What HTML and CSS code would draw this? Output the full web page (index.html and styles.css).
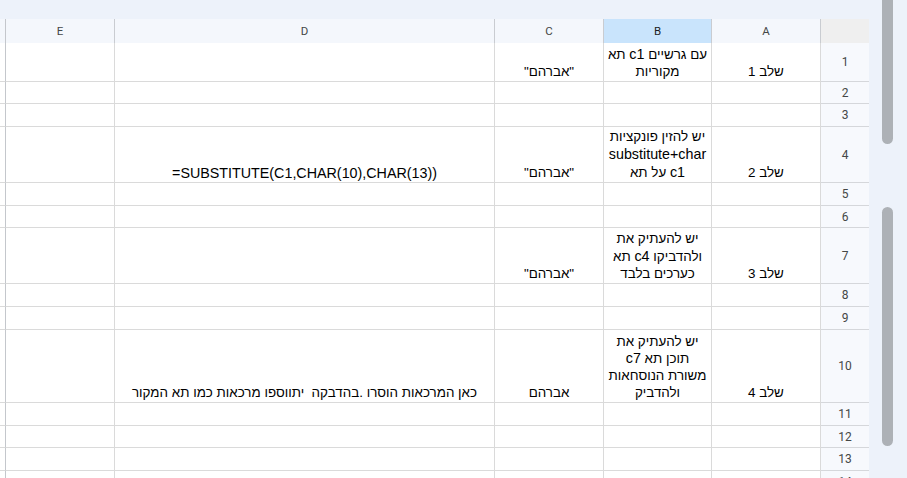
FILE: index.html
```html
<!DOCTYPE html>
<html lang="he">
<head>
<meta charset="utf-8">
<title>Sheet</title>
<link rel="stylesheet" href="styles.css">
</head>
<body>
<div class="app">
  <div class="left">
    <div class="topbar"></div>
    <div class="sheet">
      <!-- header -->
      <div class="hd edge"></div>
      <div class="hd">E</div>
      <div class="hd">D</div>
      <div class="hd">C</div>
      <div class="hd sel">B</div>
      <div class="hd">A</div>
      <div class="corner"></div>

      <!-- row 1 -->
      <div class="c edge"></div>
      <div class="c"></div>
      <div class="c"></div>
      <div class="c"><p class="t" dir="rtl">"אברהם"</p></div>
      <div class="c"><p class="t" dir="ltr">תא <span class="lat">c1</span> עם גרשיים<br>מקוריות</p></div>
      <div class="c"><p class="t" dir="rtl">שלב 1</p></div>
      <div class="rn">1</div>

      <!-- row 2 -->
      <div class="c edge"></div><div class="c"></div><div class="c"></div><div class="c"></div><div class="c"></div><div class="c"></div><div class="rn">2</div>
      <!-- row 3 -->
      <div class="c edge"></div><div class="c"></div><div class="c"></div><div class="c"></div><div class="c"></div><div class="c"></div><div class="rn">3</div>

      <!-- row 4 -->
      <div class="c edge"></div>
      <div class="c"></div>
      <div class="c"><p class="t latin" dir="ltr">=SUBSTITUTE(C1,CHAR(10),CHAR(13))</p></div>
      <div class="c"><p class="t" dir="rtl">"אברהם"</p></div>
      <div class="c"><p class="t" dir="ltr">יש להזין פונקציות<br><span class="lat">substitute+char</span><br>על תא <span class="lat">c1</span></p></div>
      <div class="c"><p class="t" dir="rtl">שלב 2</p></div>
      <div class="rn">4</div>

      <!-- row 5 -->
      <div class="c edge"></div><div class="c"></div><div class="c"></div><div class="c"></div><div class="c"></div><div class="c"></div><div class="rn">5</div>
      <!-- row 6 -->
      <div class="c edge"></div><div class="c"></div><div class="c"></div><div class="c"></div><div class="c"></div><div class="c"></div><div class="rn">6</div>

      <!-- row 7 -->
      <div class="c edge"></div>
      <div class="c"></div>
      <div class="c"></div>
      <div class="c"><p class="t" dir="rtl">"אברהם"</p></div>
      <div class="c"><p class="t" dir="ltr">יש להעתיק את<br>תא <span class="lat">c4</span> ולהדביקו<br>כערכים בלבד</p></div>
      <div class="c"><p class="t" dir="rtl">שלב 3</p></div>
      <div class="rn">7</div>

      <!-- row 8 -->
      <div class="c edge"></div><div class="c"></div><div class="c"></div><div class="c"></div><div class="c"></div><div class="c"></div><div class="rn">8</div>
      <!-- row 9 -->
      <div class="c edge"></div><div class="c"></div><div class="c"></div><div class="c"></div><div class="c"></div><div class="c"></div><div class="rn">9</div>

      <!-- row 10 -->
      <div class="c edge"></div>
      <div class="c"></div>
      <div class="c"><p class="t" dir="rtl">כאן המרכאות הוסרו .בהדבקה&nbsp; יתווספו מרכאות כמו תא המקור</p></div>
      <div class="c"><p class="t" dir="rtl">אברהם</p></div>
      <div class="c"><p class="t" dir="ltr">יש להעתיק את<br><span class="lat">c7</span> תוכן תא<br>משורת הנוסחאות<br>ולהדביק</p></div>
      <div class="c"><p class="t" dir="rtl">שלב 4</p></div>
      <div class="rn">10</div>

      <!-- row 11 -->
      <div class="c edge"></div><div class="c"></div><div class="c"></div><div class="c"></div><div class="c"></div><div class="c"></div><div class="rn">11</div>
      <!-- row 12 -->
      <div class="c edge"></div><div class="c"></div><div class="c"></div><div class="c"></div><div class="c"></div><div class="c"></div><div class="rn">12</div>
      <!-- row 13 -->
      <div class="c edge"></div><div class="c"></div><div class="c"></div><div class="c"></div><div class="c"></div><div class="c"></div><div class="rn">13</div>
      <!-- row 14 -->
      <div class="c edge"></div><div class="c"></div><div class="c"></div><div class="c"></div><div class="c"></div><div class="c"></div><div class="rn">14</div>
    </div>
  </div>
  <div class="scroll">
    <div class="thumb thumb-top"></div>
    <div class="thumb thumb-main"></div>
  </div>
</div>
</body>
</html>
```

FILE: styles.css
```css
* { box-sizing: border-box; }

html, body {
  margin: 0;
  padding: 0;
  width: 907px;
  height: 478px;
  overflow: hidden;
  background: #edf2fa;
}

.app {
  display: flex;
  width: 907px;
  height: 478px;
  overflow: hidden;
}

.left {
  width: 869px;
  display: flex;
  flex-direction: column;
  flex-shrink: 0;
}

.topbar {
  height: 19px;
  flex-shrink: 0;
  background: #edf2fa;
}

.sheet {
  flex-shrink: 0;
  display: grid;
  grid-template-columns: 6px 109px 380px 109px 108px 109px 48px;
  grid-template-rows: 24px 39px 22px 23px 56px 23px 22px 56px 23px 23px 73px 23px 22px 23px 22px;
  background: #ffffff;
  font-family: "Liberation Sans", Arial, "DejaVu Sans", sans-serif;
}

.hd {
  background: #f4f7fc;
  border-right: 1px solid #c9ccd1;
  color: #444746;
  font-family: Roboto, "Liberation Sans", sans-serif;
  font-size: 11.5px;
  display: flex;
  align-items: center;
  justify-content: center;
}

.hd.sel {
  background: #c9e4fc;
  color: #1f1f1f;
}

.corner {
  background: #efefef;
}

.c {
  border-right: 1px solid #dadada;
  border-bottom: 1px solid #dadada;
  display: flex;
  flex-direction: column;
  justify-content: flex-end;
  padding: 0 3px 0.5px;
  overflow: hidden;
}

.t {
  margin: 0;
  font-size: 13.4px;
  line-height: 16.7px;
  color: #000;
  text-align: center;
  white-space: nowrap;
}

.t.latin,
.lat {
  font-size: 14.3px;
}

.c.edge,
.hd.edge {
  border-right: 1px solid #c4c7cc;
  padding: 0;
}

.rn {
  background: #f7f9fd;
  border-bottom: 1px solid #d5d7db;
  color: #444746;
  font-family: Roboto, "Liberation Sans", sans-serif;
  font-size: 12px;
  display: flex;
  align-items: center;
  justify-content: center;
}

.scroll {
  width: 38px;
  flex-shrink: 0;
  display: flex;
  flex-direction: column;
  gap: 63px;
  padding-left: 13px;
}

.thumb {
  width: 11px;
  flex-shrink: 0;
  background: #adb1b6;
  border-radius: 6px;
}

.thumb-top {
  height: 154px;
  margin-top: -10px;
}

.thumb-main {
  height: 239px;
}
```
